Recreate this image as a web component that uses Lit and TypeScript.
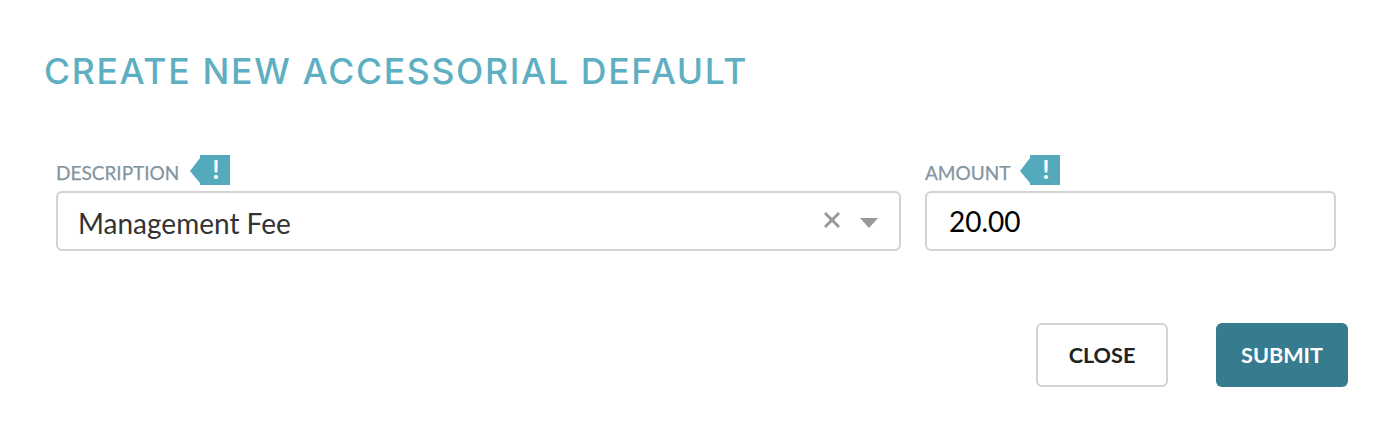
import { LitElement, html, css } from "lit";
import { customElement } from "lit/decorators.js";

const badge = html`<span class="badge" aria-hidden="true"><span class="tip"></span><span class="mark">!</span></span>`;

@customElement("app-root")
export class AppRoot extends LitElement {
  static styles = css`
    :host { display: block; width: 1396px; height: 428px; background: #fff; font-family: "Lato", "Liberation Sans", sans-serif; box-sizing: border-box; padding: 51px 48px 0 44px; overflow: hidden; }
    h1 { margin: 0; height: 42px; font: 500 35.5px/42px "Inter", "Open Sans", sans-serif; color: #5eafc1; letter-spacing: 1.7px; white-space: nowrap; }
    .form { display: grid; grid-template-columns: 845px 411px; column-gap: 24px; margin: 62px 0 0 12px; }
    .label-row { display: flex; align-items: flex-start; height: 36px; }
    label { font-size: 19px; line-height: 22px; color: #84959f; margin: 7px 10px 0 0; -webkit-text-stroke: 0.25px #84959f; }
    .desc label { margin-right: 11px; }
    .badge { display: flex; height: 30px; }
    .tip { width: 0; height: 0; margin-top: 3px; border-style: solid; border-width: 13px 10px 12px 0; border-color: transparent #55a9bd transparent transparent; }
    .mark { width: 29px; height: 30px; padding-left: 1px; background: #55a9bd; color: #fff; font: 700 26px/29px "Lato", sans-serif; text-align: center; }
    .box { height: 60px; box-sizing: border-box; border: 2px solid #d3d3d3; border-radius: 6px; display: flex; align-items: center; padding: 0 22px; font-size: 28px; }
    .box .value { flex: 1; color: #333; }
    .box.amount .value { color: #000; }
    .select .value { padding-top: 4px; }
    .x { width: 18px; height: 18px; margin-right: 19px; margin-bottom: 3px; }
    .caret { width: 0; height: 0; border-style: solid; border-width: 10px 9px 0; border-color: #999 transparent transparent; margin: 3px 1px 0 0; }
    .select { padding: 0 20px; }
    .actions { display: flex; justify-content: flex-end; gap: 48px; margin-top: 72px; }
    button { width: 132px; height: 64px; box-sizing: border-box; border-radius: 6px; padding: 0 0 1px; font: 700 21.6px "Lato", sans-serif; cursor: pointer; }
    .close { background: #fff; border: 2px solid #d3d3d3; color: #222; }
    .submit { background: #377b8e; border: 0; color: #fff; }
  `;

  render() {
    return html`
      <h1>CREATE NEW ACCESSORIAL DEFAULT</h1>
      <div class="form">
        <div class="desc">
          <div class="label-row"><label>DESCRIPTION</label>${badge}</div>
          <div class="box select">
            <span class="value">Management Fee</span>
            <svg class="x" viewBox="0 0 18 18"><path d="M2 2 16 16M16 2 2 16" stroke="#999" stroke-width="3" fill="none"/></svg>
            <span class="caret"></span>
          </div>
        </div>
        <div>
          <div class="label-row"><label>AMOUNT</label>${badge}</div>
          <div class="box amount"><span class="value">20.00</span></div>
        </div>
      </div>
      <div class="actions">
        <button class="close">CLOSE</button>
        <button class="submit">SUBMIT</button>
      </div>
    `;
  }
}
